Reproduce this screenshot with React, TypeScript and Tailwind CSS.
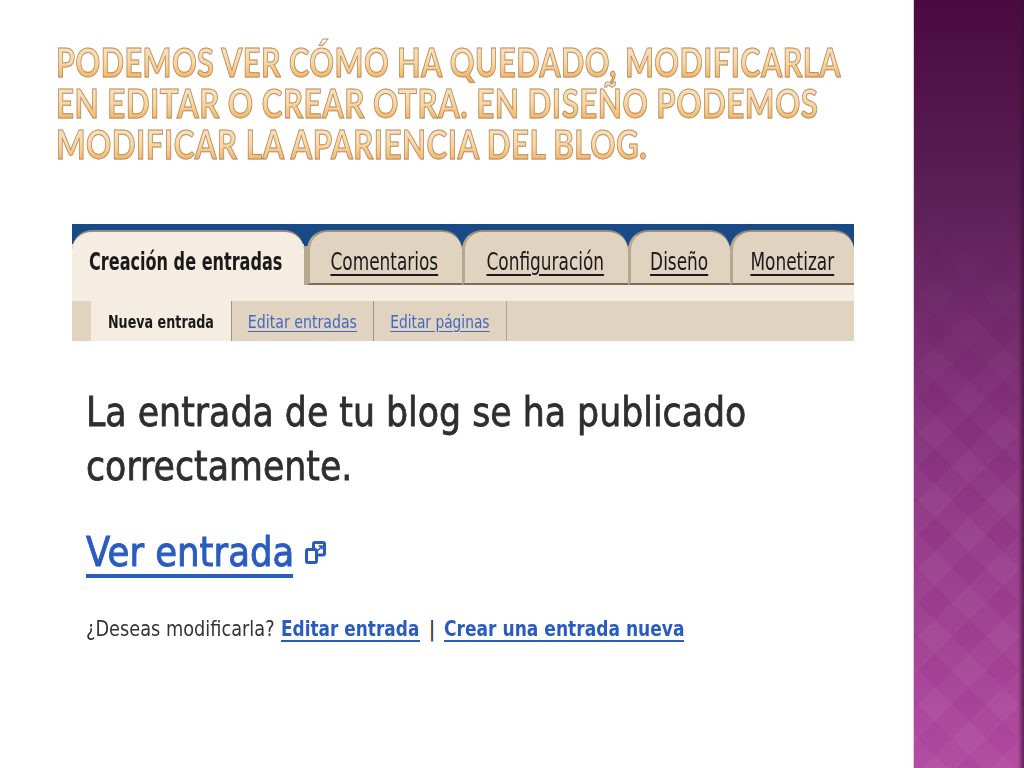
const titleLines = [
  { text: "PODEMOS VER CÓMO HA QUEDADO, MODIFICARLA", scale: "scale-x-[0.766]" },
  { text: "EN EDITAR O CREAR OTRA. EN DISEÑO PODEMOS", scale: "scale-x-[0.784]" },
  { text: "MODIFICAR LA APARIENCIA DEL BLOG.", scale: "scale-x-[0.782]" },
];

const tabs = [
  { label: "Comentarios", width: "w-[155px]" },
  { label: "Configuración", width: "w-[166px]" },
  { label: "Diseño", width: "w-[102px]" },
  { label: "Monetizar", width: "w-[124px]" },
];

function ExternalIcon() {
  return (
    <svg width="21" height="24" viewBox="0 0 21 24" fill="none" stroke="#2a5cc0" strokeWidth="3" className="ml-[12px] mt-[14px]">
      <rect x="8.5" y="1.5" width="11" height="12.5" rx="1.5" />
      <rect x="1.5" y="8.5" width="10" height="13" rx="1.5" fill="#fff" />
      <path d="M13 9.5 16.5 5.5M13.5 5h3.5v3.5" strokeWidth="1.6" />
    </svg>
  );
}

function Tab({ label, width }: { label: string; width: string }) {
  return (
    <div className={`${width} flex h-[55px] items-center justify-center rounded-t-[20px] border-l-[3px] border-t-[2px] border-b-[2px] border-l-[#b8a78f] border-t-[#9a8c76] border-b-[#7c6c58] bg-[#e0d3c0] pr-[3px] pt-[8px] text-[24px] leading-none text-[#1a1a1a] underline decoration-[1.5px] underline-offset-[4px]`}>
      <span className="inline-block scale-x-[0.706] whitespace-nowrap">{label}</span>
    </div>
  );
}

export default function App() {
  return (
    <div className="flex h-[768px] w-[1024px] overflow-hidden bg-white font-['Open_Sans',sans-serif]">
      <main className="w-[913px] shrink-0">
        <h1 className="pl-[56px] pt-[42px] font-['Lato',sans-serif] text-[40px] font-bold leading-[41px] tracking-[0.6px]">
          {titleLines.map((line) => (
            <div
              key={line.text}
              className={`${line.scale} w-fit origin-left whitespace-nowrap bg-gradient-to-b from-[#fbe3c2] via-[#fbd79f] to-[#f5a94a] bg-clip-text text-transparent [-webkit-text-stroke:1px_#b3906f]`}
            >
              {line.text}
            </div>
          ))}
        </h1>

        <section className="ml-[72px] mt-[59px] w-[782px] font-['DejaVu_Sans',sans-serif]">
          <div className="bg-[linear-gradient(#174a86_0,#174a86_20px,#f5ece2_20px)] pt-[6px]">
            <div className="flex">
              <div className="flex h-[71px] w-[232px] items-start rounded-t-[20px] border-t-[2px] border-[#9a8c76] bg-[#f5ece2] pl-[17px] pt-[18px] text-[24px] font-bold leading-none text-[#1a1a1a]">
                <span className="inline-block origin-left scale-x-[0.67] whitespace-nowrap">Creación de entradas</span>
              </div>
              <div className="flex h-[55px] flex-1 bg-[linear-gradient(#174a86_0,#174a86_16px,#b8a78f_16px)] pl-[3px]">
                {tabs.map((tab) => (
                  <Tab key={tab.label} label={tab.label} width={tab.width} />
                ))}
              </div>
            </div>
          </div>
          <div className="flex h-[40px] bg-[#e0d3c0] text-[18px]">
            <div className="ml-[19px] flex w-[140px] items-center justify-center bg-[#f5ece2] font-bold text-[#1a1a1a]">
              <span className="inline-block scale-x-[0.707] whitespace-nowrap">Nueva entrada</span>
            </div>
            <div className="flex w-[143px] items-center justify-center border-x border-[#a39279] text-[#3f68c4] underline underline-offset-[3px]">
              <span className="inline-block scale-x-[0.786] whitespace-nowrap">Editar entradas</span>
            </div>
            <div className="flex w-[133px] items-center justify-center border-r border-[#b3a48e] text-[#3f68c4] underline underline-offset-[3px]">
              <span className="inline-block scale-x-[0.766] whitespace-nowrap">Editar páginas</span>
            </div>
          </div>

          <div className="pl-[14px]">
            <p className="mt-[44px] origin-left scale-x-[0.848] whitespace-nowrap text-[41px] font-normal leading-[54px] text-[#2e2e2e] [-webkit-text-stroke:0.8px_#2e2e2e]">
              La entrada de tu blog se ha publicado
              <br />
              correctamente.
            </p>
            <div className="mt-[34px] flex">
              <a className="inline-block h-[51px] border-b-[4px] border-[#2a5cc0] text-[41px] font-normal leading-[50px] text-[#2a5cc0] [-webkit-text-stroke:1px_#2a5cc0]">
                <span className="inline-block w-[207px] origin-left scale-x-[0.866] whitespace-nowrap">Ver entrada</span>
              </a>
              <ExternalIcon />
            </div>
            <p className="mt-[40px] flex whitespace-nowrap text-[21px] leading-[22px] text-[#333]">
              <span className="inline-block w-[195px] origin-left scale-x-[0.845]">¿Deseas modificarla?</span>
              <a className="w-[139px] border-b-[2px] border-[#2a5cc0] font-bold text-[#2a5cc0]">
                <span className="inline-block origin-left scale-x-[0.807]">Editar entrada</span>
              </a>
              <span className="w-[24px] text-center">|</span>
              <a className="w-[240px] border-b-[2px] border-[#2a5cc0] font-bold text-[#2a5cc0]">
                <span className="inline-block origin-left scale-x-[0.814]">Crear una entrada nueva</span>
              </a>
            </p>
          </div>
        </section>
      </main>

      <aside className="relative h-full flex-1 border-l border-[#eec5e8] bg-[linear-gradient(#4a0a40,#5b1f55_25%,#84307b_55%,#b0479f)]">
        <div className="absolute inset-0 bg-[repeating-linear-gradient(45deg,rgba(255,255,255,0.035)_0,rgba(255,255,255,0.035)_24px,transparent_24px,transparent_48px),repeating-linear-gradient(-45deg,rgba(255,255,255,0.035)_0,rgba(255,255,255,0.035)_24px,transparent_24px,transparent_48px)] [mask-image:linear-gradient(transparent_25%,black_65%)]" />
        <div className="absolute inset-y-0 right-0 w-[6px] bg-gradient-to-r from-transparent to-[#3a1034]/70" />
      </aside>
    </div>
  );
}
